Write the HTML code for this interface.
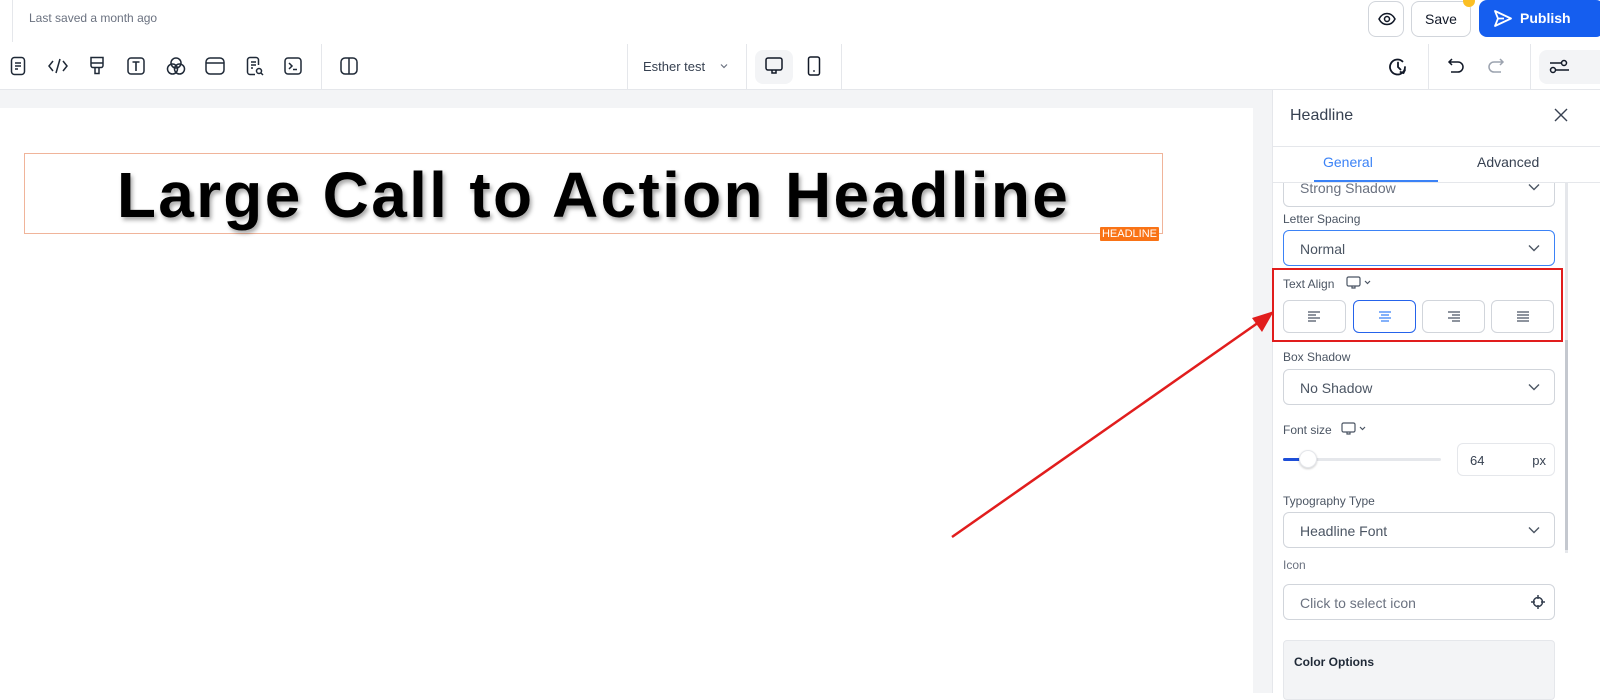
<!DOCTYPE html>
<html><head><meta charset="utf-8">
<style>
*{box-sizing:border-box;margin:0;padding:0}
body{width:1600px;height:693px;overflow:hidden;background:#fff;font-family:"Liberation Sans",sans-serif;position:relative;color:#374151}
.abs{position:absolute}
svg{display:block}
.ic{position:absolute;top:56px}
.btn{position:absolute;border:1px solid #d1d5db;border-radius:8px;background:#fff}
.lbl{position:absolute;left:1283px;font-size:12px;color:#4b5563}
.sel{position:absolute;left:1283px;width:272px;height:36px;border:1px solid #d1d5db;border-radius:6px;font-size:14px;color:#4b5563;padding:10px 16px;background:#fff}
.chev{position:absolute;right:14px;top:13px}
.al{position:absolute;top:300px;width:63px;height:33px;border:1px solid #d1d5db;border-radius:6px}
.al svg{position:absolute;left:24px;top:10px}
</style></head><body>
<!-- top bar -->
<div class="abs" style="left:12px;top:0;width:1px;height:42px;background:#e5e7eb"></div>
<div class="abs" style="left:29px;top:11px;font-size:12px;color:#6b7280">Last saved a month ago</div>
<div class="btn" style="left:1368px;top:1px;width:36px;height:36px"><svg style="margin:10px 0 0 9px" width="18" height="14" viewBox="0 0 18 14"><path d="M1 7C3 3 6 1.5 9 1.5S15 3 17 7C15 11 12 12.5 9 12.5S3 11 1 7Z" fill="none" stroke="#111827" stroke-width="1.5"/><circle cx="9" cy="7" r="2.5" fill="none" stroke="#111827" stroke-width="1.5"/></svg></div>
<div class="btn" style="left:1411px;top:1px;width:60px;height:36px;font-size:14px;color:#111827;text-align:center;line-height:34px">Save</div>
<div class="abs" style="left:1463px;top:-5px;width:12px;height:12px;border-radius:50%;background:#fbbf24"></div>
<div class="abs" style="left:1479px;top:0;width:125px;height:37px;background:#155eef;border-radius:8px;color:#fff;font-weight:bold;font-size:14px;line-height:36px;padding-left:41px">Publish</div>
<svg class="abs" style="left:1493px;top:9px" width="20" height="19" viewBox="0 0 20 19"><path d="M2 2L18 9.5L2 17L5 9.5Z M5 9.5H11" fill="none" stroke="#fff" stroke-width="1.8" stroke-linejoin="round"/></svg>

<!-- toolbar -->
<div class="abs" style="left:0;top:89px;width:1600px;height:1px;background:#e5e7eb"></div>
<svg class="ic" style="left:10px" width="16" height="20" viewBox="0 0 16 20"><rect x="1.5" y="1.5" width="13" height="17" rx="3" fill="none" stroke="#1f2937" stroke-width="1.5"/><path d="M5 7h6M5 10h6M5 13h3" stroke="#1f2937" stroke-width="1.5"/></svg>
<svg class="ic" style="left:48px;top:58px" width="20" height="16" viewBox="0 0 20 16"><path d="M5 3L1 8L5 13M15 3L19 8L15 13M12 1L8 15" fill="none" stroke="#1f2937" stroke-width="1.5"/></svg>
<svg class="ic" style="left:89px" width="16" height="20" viewBox="0 0 16 20"><path d="M2 1.5h12v8a2 2 0 0 1-2 2H4a2 2 0 0 1-2-2ZM2 7h12M6 11.5v6h4v-6" fill="none" stroke="#1f2937" stroke-width="1.5"/></svg>
<svg class="ic" style="left:127px;top:57px" width="18" height="18" viewBox="0 0 18 18"><rect x="1" y="1" width="16" height="16" rx="3" fill="none" stroke="#1f2937" stroke-width="1.5"/><path d="M5.5 5h7M9 5v9" stroke="#1f2937" stroke-width="1.6"/></svg>
<svg class="ic" style="left:166px" width="20" height="20" viewBox="0 0 20 20"><circle cx="10" cy="7" r="5" fill="none" stroke="#1f2937" stroke-width="1.5"/><circle cx="6.5" cy="13" r="5" fill="none" stroke="#1f2937" stroke-width="1.5"/><circle cx="13.5" cy="13" r="5" fill="none" stroke="#1f2937" stroke-width="1.5"/></svg>
<svg class="ic" style="left:205px;top:57px" width="20" height="18" viewBox="0 0 20 18"><rect x="1" y="1" width="18" height="16" rx="4" fill="none" stroke="#1f2937" stroke-width="1.5"/><path d="M1 6h18" stroke="#1f2937" stroke-width="1.5"/></svg>
<svg class="ic" style="left:246px" width="18" height="20" viewBox="0 0 18 20"><path d="M9 18.5H4a2.5 2.5 0 0 1-2.5-2.5V4A2.5 2.5 0 0 1 4 1.5h6a2.5 2.5 0 0 1 2.5 2.5v5M5 6h5M5 9h5M5 12h2" fill="none" stroke="#1f2937" stroke-width="1.5"/><circle cx="13" cy="15" r="2.5" fill="none" stroke="#1f2937" stroke-width="1.5"/><path d="M15 17l2 2" stroke="#1f2937" stroke-width="1.5"/></svg>
<svg class="ic" style="left:284px;top:57px" width="18" height="18" viewBox="0 0 18 18"><rect x="1" y="1" width="16" height="16" rx="3" fill="none" stroke="#1f2937" stroke-width="1.5"/><path d="M5 6l3 3-3 3M9 12.5h4" fill="none" stroke="#1f2937" stroke-width="1.5"/></svg>
<div class="abs" style="left:321px;top:44px;width:1px;height:45px;background:#e5e7eb"></div>
<svg class="ic" style="left:340px;top:57px" width="18" height="18" viewBox="0 0 18 18"><rect x="1" y="1" width="16" height="16" rx="4" fill="none" stroke="#1f2937" stroke-width="1.5"/><path d="M9 1v16" stroke="#1f2937" stroke-width="1.5"/></svg>
<div class="abs" style="left:627px;top:44px;width:1px;height:45px;background:#e5e7eb"></div>
<div class="abs" style="left:643px;top:59px;font-size:13px;color:#374151">Esther test</div>
<svg class="abs" style="left:720px;top:63px" width="8" height="6" viewBox="0 0 8 6"><path d="M1 1.5l3 3 3-3" fill="none" stroke="#6b7280" stroke-width="1.2"/></svg>
<div class="abs" style="left:746px;top:44px;width:1px;height:45px;background:#e5e7eb"></div>
<div class="abs" style="left:755px;top:50px;width:38px;height:34px;background:#f3f4f6;border-radius:8px"></div>
<svg class="abs" style="left:765px;top:57px" width="18" height="18" viewBox="0 0 18 18"><rect x="1" y="1" width="16" height="12" rx="2" fill="none" stroke="#111827" stroke-width="1.5"/><path d="M7 13v3h4v-3" fill="none" stroke="#111827" stroke-width="1.5"/></svg>
<svg class="abs" style="left:807px;top:56px" width="14" height="20" viewBox="0 0 14 20"><rect x="1.5" y="1" width="11" height="18" rx="2" fill="none" stroke="#111827" stroke-width="1.5"/><circle cx="7" cy="15" r="0.9" fill="#111827"/></svg>
<div class="abs" style="left:841px;top:44px;width:1px;height:45px;background:#e5e7eb"></div>
<svg class="abs" style="left:1388px;top:57px" width="20" height="20" viewBox="0 0 20 20"><path d="M17 10a7.5 7.5 0 1 1-2.5-5.6M10 5.5V10l2.5 2.5M17 13l-1.5 3-3-1" fill="none" stroke="#111827" stroke-width="1.8" stroke-linecap="round"/></svg>
<div class="abs" style="left:1428px;top:44px;width:1px;height:45px;background:#e5e7eb"></div>
<svg class="abs" style="left:1447px;top:57px" width="18" height="18" viewBox="0 0 18 18"><path d="M5 2L2 5l3 3M2 5h9a5 5 0 0 1 0 10H4" fill="none" stroke="#111827" stroke-width="1.5"/></svg>
<svg class="abs" style="left:1487px;top:57px" width="18" height="18" viewBox="0 0 18 18"><path d="M13 2l3 3-3 3M16 5H7a5 5 0 0 0 0 10h7" fill="none" stroke="#9ca3af" stroke-width="1.5"/></svg>
<div class="abs" style="left:1530px;top:44px;width:1px;height:45px;background:#e5e7eb"></div>
<div class="abs" style="left:1539px;top:50px;width:70px;height:34px;background:#f3f4f6;border-radius:8px"></div>
<svg class="abs" style="left:1549px;top:58px" width="20" height="18" viewBox="0 0 20 18"><circle cx="4" cy="12" r="2.5" fill="none" stroke="#111827" stroke-width="1.5"/><circle cx="15" cy="5" r="2.5" fill="none" stroke="#111827" stroke-width="1.5"/><path d="M1 5h11M7 12h13" stroke="#111827" stroke-width="1.5"/></svg>

<!-- canvas -->
<div class="abs" style="left:0;top:90px;width:1272px;height:603px;background:#f3f4f6"></div>
<div class="abs" style="left:0;top:108px;width:1253px;height:585px;background:#fff"></div>
<div class="abs" style="left:24px;top:153px;width:1139px;height:81px;border:1px solid #f0b49a"></div>
<div class="abs" style="left:24px;top:158px;width:1139px;text-align:center;font-weight:bold;font-size:64px;letter-spacing:2.3px;color:#000;text-shadow:2px 3px 4px rgba(0,0,0,.35);line-height:74px">Large Call to Action Headline</div>
<div class="abs" style="left:1100px;top:227px;width:59px;height:14px;background:#f97316;color:#fff;font-size:11px;line-height:14px;text-align:center;border-radius:1px">HEADLINE</div>
<!-- arrow -->
<svg class="abs" style="left:940px;top:300px" width="340" height="250" viewBox="940 300 340 250"><path d="M952 537L1262 320" stroke="#e11d1d" stroke-width="2.5"/><path d="M1274 311L1252 318L1262 332Z" fill="#e11d1d"/></svg>

<!-- panel -->
<div class="abs" style="left:1272px;top:90px;width:1px;height:603px;background:#e5e7eb"></div>
<div class="abs" style="left:1290px;top:107px;font-size:16px;color:#374151">Headline</div>
<svg class="abs" style="left:1554px;top:108px" width="14" height="14" viewBox="0 0 14 14"><path d="M1 1l12 12M13 1L1 13" stroke="#374151" stroke-width="1.4"/></svg>
<div class="abs" style="left:1272px;top:146px;width:328px;height:1px;background:#e5e7eb"></div>
<div class="abs" style="left:1323px;top:154px;font-size:14px;color:#3b82f6">General</div>
<div class="abs" style="left:1477px;top:154px;font-size:14px;color:#374151">Advanced</div>
<div class="abs" style="left:1314px;top:180px;width:124px;height:2px;background:#3b82f6"></div>
<div class="abs" style="left:1272px;top:182px;width:328px;height:1px;background:#e5e7eb"></div>
<div class="abs" style="left:1565px;top:183px;width:3px;height:370px;background:#e5e7eb"></div>
<div class="abs" style="left:1565px;top:340px;width:3px;height:210px;background:#c4c8cf"></div>
<div class="sel" style="top:170px;height:37px;border-top:none;border-radius:0 0 6px 6px;color:#6b7280;padding-top:10px;clip-path:inset(13px 0 0 0)">Strong Shadow<svg class="chev" width="12" height="8" viewBox="0 0 12 8"><path d="M1 1.5l5 5 5-5" fill="none" stroke="#4b5563" stroke-width="1.4"/></svg></div>
<div class="lbl" style="top:212px">Letter Spacing</div>
<div class="sel" style="top:230px;border-color:#3b82f6">Normal<svg class="chev" width="12" height="8" viewBox="0 0 12 8"><path d="M1 1.5l5 5 5-5" fill="none" stroke="#4b5563" stroke-width="1.4"/></svg></div>
<div class="abs" style="left:1272px;top:268px;width:291px;height:74px;border:2px solid #e11d1d"></div>
<div class="lbl" style="top:277px">Text Align</div>
<svg class="abs" style="left:1346px;top:276px" width="26" height="14" viewBox="0 0 26 14"><rect x="1" y="1" width="13" height="9" rx="1.5" fill="none" stroke="#4b5563" stroke-width="1.2"/><path d="M6 10v2h3v-2M19 5l2.5 2.5L24 5" fill="none" stroke="#4b5563" stroke-width="1.2"/></svg>
<div class="al" style="left:1283px"><svg width="14" height="11" viewBox="0 0 14 11"><path d="M0 1h12M0 4h8M0 7h12M0 10h8" stroke="#4b5563" stroke-width="1.3"/></svg></div>
<div class="al" style="left:1353px;border-color:#2563eb"><svg width="14" height="11" viewBox="0 0 14 11"><path d="M1 1h12M3 4h8M1 7h12M3 10h8" stroke="#3b82f6" stroke-width="1.3"/></svg></div>
<div class="al" style="left:1422px"><svg width="14" height="11" viewBox="0 0 14 11"><path d="M1 1h12M5 4h8M1 7h12M5 10h8" stroke="#4b5563" stroke-width="1.3"/></svg></div>
<div class="al" style="left:1491px"><svg width="14" height="11" viewBox="0 0 14 11"><path d="M1 1h12M1 4h12M1 7h12M1 10h12" stroke="#4b5563" stroke-width="1.3"/></svg></div>
<div class="lbl" style="top:350px">Box Shadow</div>
<div class="sel" style="top:369px">No Shadow<svg class="chev" width="12" height="8" viewBox="0 0 12 8"><path d="M1 1.5l5 5 5-5" fill="none" stroke="#4b5563" stroke-width="1.4"/></svg></div>
<div class="lbl" style="top:423px">Font size</div>
<svg class="abs" style="left:1341px;top:422px" width="26" height="14" viewBox="0 0 26 14"><rect x="1" y="1" width="13" height="9" rx="1.5" fill="none" stroke="#4b5563" stroke-width="1.2"/><path d="M6 10v2h3v-2M19 5l2.5 2.5L24 5" fill="none" stroke="#4b5563" stroke-width="1.2"/></svg>
<div class="abs" style="left:1283px;top:458px;width:158px;height:3px;background:#e5e7eb;border-radius:2px"></div>
<div class="abs" style="left:1283px;top:458px;width:20px;height:3px;background:#1d4ed8;border-radius:2px"></div>
<div class="abs" style="left:1299px;top:450px;width:18px;height:18px;border-radius:50%;background:#fff;border:1px solid #e5e7eb;box-shadow:0 1px 2px rgba(0,0,0,.2)"></div>
<div class="abs" style="left:1457px;top:443px;width:98px;height:33px;border:1px solid #e5e7eb;border-radius:6px;font-size:13px;color:#374151;padding:9px 12px">64<span style="position:absolute;right:8px;top:9px">px</span></div>
<div class="lbl" style="top:494px">Typography Type</div>
<div class="sel" style="top:512px">Headline Font<svg class="chev" width="12" height="8" viewBox="0 0 12 8"><path d="M1 1.5l5 5 5-5" fill="none" stroke="#4b5563" stroke-width="1.4"/></svg></div>
<div class="lbl" style="top:558px;color:#6b7280">Icon</div>
<div class="sel" style="top:584px;color:#6b7280">Click to select icon<svg class="abs" style="right:9px;top:10px" width="14" height="14" viewBox="0 0 14 14"><circle cx="7" cy="7" r="4.5" fill="none" stroke="#374151" stroke-width="1.5"/><path d="M7 0v4M7 10v4M0 7h4M10 7h4" stroke="#374151" stroke-width="1.5"/></svg></div>
<div class="abs" style="left:1283px;top:640px;width:272px;height:60px;background:#f3f4f6;border:1px solid #e5e7eb;border-radius:4px;font-size:12px;font-weight:bold;color:#1f2937;padding:14px 10px">Color Options</div>
</body></html>
